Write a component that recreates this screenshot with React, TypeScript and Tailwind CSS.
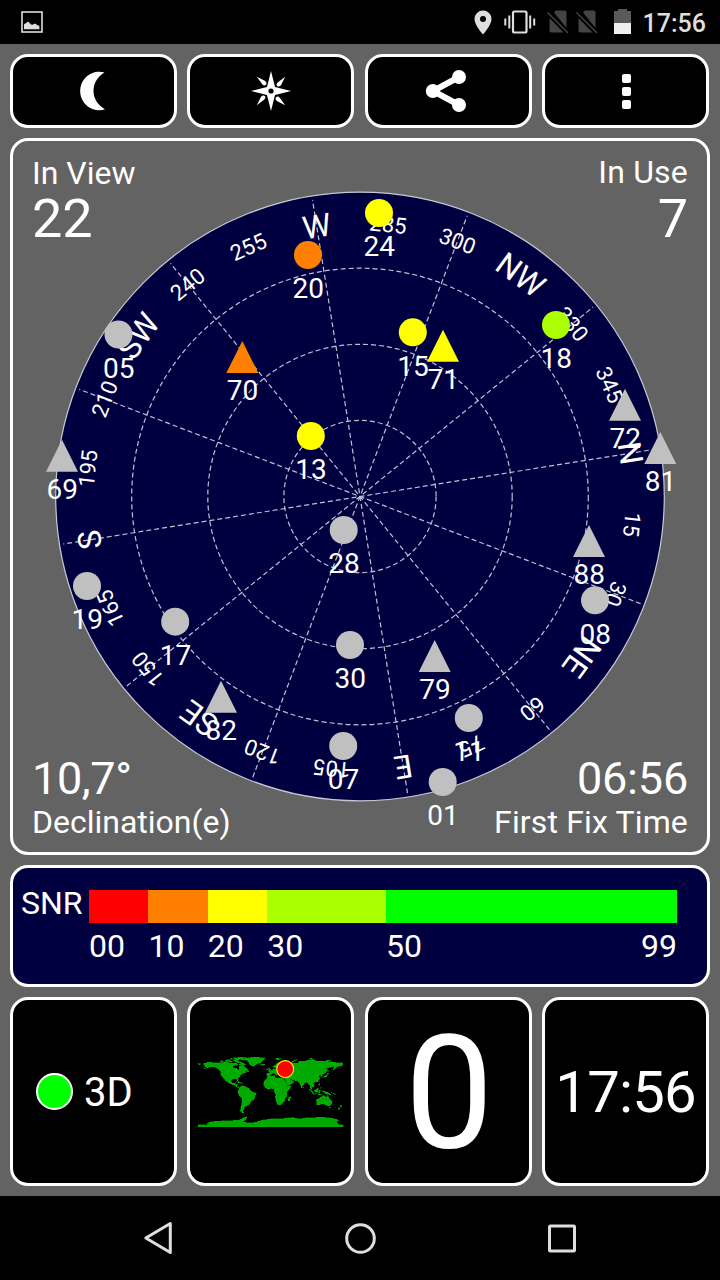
import type { ReactNode } from "react";

type Satellite = {
  id: string;
  x: number;
  y: number;
  shape: "circle" | "triangle";
  color: string;
};

const HEADING = 80.9;
const CX = 360;
const CY = 496.5;
const RADIUS = 304.3;

const GRAY = "#c0c0c0";
const ORANGE = "#ff8000";
const YELLOW = "#ffff00";
const LIME = "#aaff00";

const satellites: Satellite[] = [
  { id: "24", x: 379, y: 213, shape: "circle", color: YELLOW },
  { id: "20", x: 308, y: 255, shape: "circle", color: ORANGE },
  { id: "05", x: 118.5, y: 334.5, shape: "circle", color: GRAY },
  { id: "70", x: 242.3, y: 357, shape: "triangle", color: ORANGE },
  { id: "15", x: 412.8, y: 332.3, shape: "circle", color: YELLOW },
  { id: "71", x: 443, y: 345.7, shape: "triangle", color: YELLOW },
  { id: "18", x: 556, y: 325, shape: "circle", color: LIME },
  { id: "72", x: 625, y: 404.8, shape: "triangle", color: GRAY },
  { id: "81", x: 660.3, y: 448, shape: "triangle", color: GRAY },
  { id: "13", x: 310.8, y: 436, shape: "circle", color: YELLOW },
  { id: "69", x: 62, y: 455.8, shape: "triangle", color: GRAY },
  { id: "28", x: 343.7, y: 530, shape: "circle", color: GRAY },
  { id: "88", x: 589, y: 541, shape: "triangle", color: GRAY },
  { id: "08", x: 595, y: 600.3, shape: "circle", color: GRAY },
  { id: "19", x: 87, y: 586, shape: "circle", color: GRAY },
  { id: "17", x: 175.2, y: 621.7, shape: "circle", color: GRAY },
  { id: "30", x: 350, y: 645, shape: "circle", color: GRAY },
  { id: "79", x: 434.7, y: 656, shape: "triangle", color: GRAY },
  { id: "82", x: 221, y: 696.7, shape: "triangle", color: GRAY },
  { id: "11", x: 468.8, y: 718, shape: "circle", color: GRAY },
  { id: "07", x: 343.2, y: 746, shape: "circle", color: GRAY },
  { id: "01", x: 442.7, y: 782, shape: "circle", color: GRAY },
];

const bearings = [
  "N", "15", "30", "NE", "60", "75", "E", "105", "120", "SE", "150", "165",
  "S", "195", "210", "SW", "240", "255", "W", "285", "300", "NW", "330", "345",
];

const snrSteps = [
  { from: 0, to: 10, label: "00", bar: "bg-[#ff0000]" },
  { from: 10, to: 20, label: "10", bar: "bg-[#ff8000]" },
  { from: 20, to: 30, label: "20", bar: "bg-[#ffff00]" },
  { from: 30, to: 50, label: "30", bar: "bg-[#aaff00]" },
  { from: 50, to: 99, label: "50", bar: "bg-[#00ff00]" },
];

// lon,lat outlines
const land = [
  // north america
  "-168,66 -162,64 -165,61 -158,58 -164,55 -152,59 -145,60 -135,58 -130,54 -124,48 -124,40 -117,33 -112,25 -106,22 -105,20 -97,16 -92,14.5 -87,12.5 -84,9 -78,7 -77,9 -83,11 -83,16 -88,16 -87,21 -91,18 -96,19 -98,24 -96,28 -90,30 -84,30 -82,25 -80,26 -81,31 -75,36 -74,40 -70,42 -66,44 -60,46 -65,49 -57,51 -56,53 -62,58 -65,60 -70,62 -77,62 -78,58 -77,55 -80,51 -83,55 -93,58 -94,61 -87,64 -82,67 -85,69 -95,68 -105,68 -115,69 -125,70 -135,69 -150,71 -157,71",
  "-180,69 -172,66 -176,65 -180,66",
  "-62,66 -66,62 -78,65 -72,68 -80,70 -88,71 -88,73.5 -78,73 -70,70",
  "-117,70 -105,69 -102,72 -110,73 -118,72",
  "-125,72 -120,71 -117,74 -123,75",
  "-100,71 -94,72 -96,74 -102,73",
  "-110,75 -100,75 -97,77 -112,76.5",
  "-93,75 -80,74.5 -80,76 -92,77",
  "-62,82 -72,83.5 -92,81.5 -86,77 -76,78",
  "-98,78 -92,79 -96,81 -101,79",
  "-86,64 -80,64 -82,66 -86,66",
  "-73,78 -60,82 -35,83.5 -13,81.5 -20,75 -24,70 -35,66 -43,60 -51,64 -54,70 -58,75.5 -68,76",
  "-24,65 -19,63.5 -14,65 -17,66.5 -23,66.5",
  "-59,47.5 -53,47 -56,51",
  "-85,22 -80,23.5 -74,20 -78,20",
  "-74,18 -68,18.5 -70,20 -73,20",
  // south america
  "-77,8 -72,12 -62,10.5 -52,5 -50,0 -44,-3 -35,-6 -39,-14 -41,-22 -48,-26 -53,-34 -58,-35 -58,-38 -62,-39 -65,-42 -66,-46 -69,-50 -68,-53 -65,-55 -71,-55 -75,-50 -73,-40 -71,-30 -70,-18 -76,-14 -81,-6 -80,0",
  // africa
  "-6,36 10,37 11,33 20,31 32,31 35,27 38,19 43,12 51,12 46,3 40,-4 40,-14 35,-20 35,-25 32,-29 26,-34 19,-35 15,-27 12,-17 13,-8 9,0 9,4 4,6 -7,4 -13,8 -17,14 -16,23 -10,30",
  "50,-15 50,-18 47,-25 44,-24 44,-17",
  // eurasia
  "-9,43 -9,37 -5,36 0,39 4,43 9,44 14,40 16,38 18,40 13,45 19,42 22,37 25,40 28,37 36,36 35,31 39,22 43,13 52,17 59,22 56,25 50,27 48,30 57,26 66,25 70,21 73,17 77,8 80,13 86,20 91,22 94,17 98,15 99,8 103,2 103,6 100,13 105,9 109,12 106,19 110,21 117,23 122,30 119,36 122,40 126,38 126,35 129,36 129,41 138,46 141,53 136,55 150,59 158,61 156,52 163,57 165,60 179,63 180,69 165,70 150,72 140,73 128,73 113,74 105,78 95,76 82,73 70,73 68,69 55,69 44,67 40,65 33,67 41,67 30,70 20,70 12,65 5,61 6,58 12,59 13,56 18,60 18,63 24,66 22,61 30,60 22,58 20,55 10,54 8,57 8,54 2,51 -4,48 -1,45",
  "-5,50 1,51 0,54 -4,58 -6,57 -3,54",
  "-10,52 -6,52 -6,55 -9,54",
  "52,71 57,71 60,75 68,77 60,76 54,73",
  "11,79 20,77 27,80 15,80.5",
  "80,9 82,7 80,6",
  "96,79 105,79 100,81",
  "138,74 150,75 142,76",
  "142,54 144,49 142,46",
  "140,42 145,43 142,45",
  "130,33 136,34 140,35 142,40 140,41 137,37 131,35",
  "108,18 111,19 110,20",
  "120,22 122,24 121,25",
  // south east asia
  "95,5 98,4 106,-3 105,-6 101,-2",
  "105,-6 115,-8 114,-9 106,-8",
  "109,1 114,4 117,7 119,5 116,-4 111,-3",
  "119,-5 120,1 125,2 121,0 123,-5 121,-3",
  "120,18 122,18 122,14 124,12 120,14",
  "122,7 126,9 126,6",
  "117,-9 127,-8 124,-10",
  "127,2 129,1 128,-2",
  "131,-1 138,-2 146,-6 151,-10 143,-9 138,-8 133,-4",
  "149,-5 152,-3 152,-5",
  "155,-6 161,-9 160,-10",
  // oceania
  "114,-22 122,-18 130,-12 136,-12 136,-15 141,-17 142,-11 146,-19 153,-26 151,-34 147,-38 140,-37 136,-34 130,-32 123,-34 115,-35",
  "145,-41 148,-41 147,-44",
  "173,-35 178,-38 175,-41 174,-38",
  "173,-41 174,-42 168,-47 167,-45",
  // antarctica
  "-180,-85 -155,-85 -158,-82 -150,-77 -115,-74.5 -100,-74 -80,-73.5 -68,-67 -58,-64 -62,-72 -70,-78 -50,-80 -35,-78 -20,-73 0,-70 30,-69.5 55,-66 70,-70 90,-67 130,-66 145,-67 160,-70 170,-73 163,-78 170,-84 180,-85 180,-90 -180,-90",
];

const StatusBar = () => (
  <header className="flex h-11 items-center justify-between bg-black pr-3.5 pl-[21px] text-[#dedede]">
    <svg width="22" height="22" viewBox="0 0 22 22" fill="none">
      <rect x="1" y="1" width="20" height="20" stroke="currentColor" strokeWidth="1.6" />
      <path d="M3 18.3v-5l2.5-1.5 1.5-1.3 3 3 1.5.2 2.5-1.3 2.5 1.8 1.8.6.2 3.5z" fill="currentColor" />
    </svg>
    <div className="flex items-center">
      <svg width="18" height="25" viewBox="0 0 18 25">
        <path
          fillRule="evenodd"
          d="M9 .5A8.5 8.5 0 0 0 .5 9C.5 15.2 9 24.5 9 24.5S17.5 15.2 17.5 9A8.5 8.5 0 0 0 9 .5zM9 6a3 3 0 1 1 0 6 3 3 0 0 1 0-6z"
          fill="currentColor"
        />
      </svg>
      <svg className="ml-3" width="32" height="24" viewBox="0 0 32 24" fill="none" stroke="currentColor">
        <rect x="9" y="1.5" width="13.5" height="21" rx="1.5" strokeWidth="2.2" />
        <path d="M5.3 5.5v13M26.2 5.5v13" strokeWidth="2" />
        <path d="M1.3 8.5v7M30.2 8.5v7" strokeWidth="2" />
      </svg>
      <NoSimIcon className="ml-[11px]" />
      <NoSimIcon className="ml-[7px]" />
      <svg className="mb-0.5 ml-4" width="17" height="25" viewBox="0 0 17 25">
        <path d="M0 2h4V0h9v2h4v12H0z" fill="#5a5a5a" />
        <path d="M0 14h17v11H0z" fill="#efefef" />
      </svg>
      <span className="mt-0.5 ml-3 text-[25px] leading-none font-medium">17:56</span>
    </div>
  </header>
);

const NoSimIcon = ({ className }: { className: string }) => (
  <svg className={className} width="22" height="24" viewBox="0 0 22 24">
    <path d="M2.5 8l14 14.5H4.5a2 2 0 0 1-2-2zM7 2.5L9 .5h8.5a2 2 0 0 1 2 2V18z" fill="#444" />
    <path d="M.5 2.5l20.5 20.5" stroke="#444" strokeWidth="1.5" />
  </svg>
);

const Tile = ({ children, className }: { children: ReactNode; className: string }) => (
  <button
    type="button"
    className={`flex items-center justify-center rounded-[18px] border-[3px] border-white bg-black ${className}`}
  >
    {children}
  </button>
);

const Toolbar = () => (
  <nav className="grid grid-cols-4 gap-[10.5px] pr-px">
    <Tile className="h-[74px]">
      <svg width="40" height="40" viewBox="0 0 40 40">
        <path
          d="M31.5 1.5C27 .3 22.500.8 19.500 2a19.300 19.300 0 0 0 0 36c4 1.500 8.500 1.500 12.500.3C24.500 34 20.500 27 20.500 20S24 6 31.500 1.500z"
          fill="#fff"
        />
      </svg>
    </Tile>
    <Tile className="h-[74px]">
      <svg width="40" height="40" viewBox="0 0 40 40" fill="#fff">
        <path
          fillRule="evenodd"
          d="M20 0l4 16L40 20l-16 4-4 16-4-16L0 20l16-4zM20 17.4a2.6 2.6 0 1 0 0 5.2 2.6 2.6 0 0 0 0-5.2z"
        />
        {[0, 90, 180, 270].map(angle => (
          <path
            key={angle}
            transform={`rotate(${angle} 20 20)`}
            d="M34.2 5.8l-4 8c-1 1.7-2.8 2.3-4 1.1-1.2-1.2-.6-3 1.1-4z"
          />
        ))}
      </svg>
    </Tile>
    <Tile className="h-[74px]">
      <svg className="mr-1" width="42" height="42" viewBox="0 0 42 42">
        <path d="M34 7L8 21l26 14" fill="none" stroke="#fff" strokeWidth="6" />
        <circle cx="7.8" cy="21" r="7" fill="#fff" />
        <circle cx="34" cy="7" r="7" fill="#fff" />
        <circle cx="34" cy="35" r="7" fill="#fff" />
      </svg>
    </Tile>
    <Tile className="h-[74px]">
      <span className="ml-px flex flex-col gap-1">
        <i className="h-[9px] w-[9px] rounded-[2px] bg-white" />
        <i className="h-[9px] w-[9px] rounded-[2px] bg-white" />
        <i className="h-[9px] w-[9px] rounded-[2px] bg-white" />
      </span>
    </Tile>
  </nav>
);

const Marker = ({ sat }: { sat: Satellite }) => (
  <g>
    {sat.shape === "circle" ? (
      <circle cx={sat.x} cy={sat.y} r="14" fill={sat.color} />
    ) : (
      <path d={`M${sat.x} ${sat.y - 16}l16 32h-32z`} fill={sat.color} />
    )}
    <text x={sat.x + 0.3} y={sat.y + 43.3} fontSize="28" textAnchor="middle">
      {sat.id}
    </text>
  </g>
);

const SkyPlot = () => (
  <svg className="absolute inset-0 h-full w-full" viewBox="13 141 694 711" fill="#fff" overflow="visible">
    <circle cx={CX} cy={CY} r={RADIUS} fill="#000040" stroke="#c8c8d4" strokeWidth="1.2" />
    <g fill="none" stroke="#c0c0d4" strokeWidth="1.2" strokeDasharray="5 3">
      {[76.1, 152.2, 228.3].map(r => (
        <circle key={r} cx={CX} cy={CY} r={r} />
      ))}
      {[0, 30, 60, 90, 120, 150].map(angle => (
        <path key={angle} transform={`rotate(${angle + HEADING} ${CX} ${CY})`} d={`M${CX} ${CY - 300.5}v601`} />
      ))}
    </g>
    {bearings.map((label, i) => {
      const isDigit = /\d/.test(label);
      return (
        <text
          key={label}
          transform={`rotate(${i * 15 + HEADING} ${CX} ${CY})`}
          x={CX}
          y={CY - (isDigit ? 265.7 : 262.6)}
          fontSize={isDigit ? 22 : 32}
          textAnchor="middle"
        >
          {label}
        </text>
      );
    })}
    {satellites.map(sat => (
      <Marker key={sat.id} sat={sat} />
    ))}
  </svg>
);

const SkyPanel = () => (
  <section className="relative flex h-[717px] flex-col justify-between rounded-[18px] border-[3px] border-white px-[19px] pt-4 pb-3.5">
    <SkyPlot />
    <div className="relative flex justify-between text-[32px] leading-8">
      <div>
        <p>In View</p>
        <p className="mt-[3px] text-[54px] leading-[54px]">22</p>
      </div>
      <div className="-mt-px text-right">
        <p className="tracking-[0.2px]">In Use</p>
        <p className="mt-1 text-[54px] leading-[54px]">7</p>
      </div>
    </div>
    <div className="relative flex justify-between text-[32px] leading-8">
      <div>
        <p className="mb-[5px] text-[45px] leading-[45px] tracking-[-0.4px]">10,7°</p>
        <p>Declination(e)</p>
      </div>
      <div className="text-right">
        <p className="mb-[5px] text-[45px] leading-[45px] tracking-[-0.2px]">06:56</p>
        <p className="tracking-[0.15px]">First Fix Time</p>
      </div>
    </div>
  </section>
);

const SnrPanel = () => (
  <section className="flex h-[122px] rounded-[18px] border-[3px] border-white bg-[#000040] pt-[19px] pr-[30px] pl-2 text-[32px] leading-8">
    <span className="w-[68px]">SNR</span>
    <div className="flex flex-1 pt-[3px]">
      {snrSteps.map(step => (
        <div key={step.label} style={{ width: `${((step.to - step.from) / 99) * 100}%` }}>
          <div className={`h-[33px] ${step.bar}`} />
          <div className="mt-[7px] flex justify-between">
            <span>{step.label}</span>
            {step.to === 99 && <span>99</span>}
          </div>
        </div>
      ))}
    </div>
  </section>
);

const WorldMap = () => (
  <svg width="145" height="70" viewBox="-180 -84 360 174" preserveAspectRatio="none" overflow="visible">
    <g transform="scale(1 -1)" fill="#00aa00" stroke="#00aa00" strokeWidth="1" shapeRendering="crispEdges">
      {land.map(points => (
        <polygon key={points} points={points} />
      ))}
    </g>
    <circle cx="36.5" cy="-54" r="21" fill="#ff0000" stroke="#ffff00" strokeWidth="2.6" />
  </svg>
);

const BottomTiles = () => (
  <div className="grid grid-cols-4 gap-[10.5px] pr-px">
    <Tile className="h-[189px] justify-start! gap-[11px] pl-[23px]">
      <span className="h-[37px] w-[37px] rounded-full border-2 border-white bg-[#00ff00]" />
      <span className="pt-0.5 text-[40px] leading-none">3D</span>
    </Tile>
    <Tile className="h-[189px]">
      <WorldMap />
    </Tile>
    <Tile className="h-[189px]">
      <span className="pt-0.5 pl-0.5 text-[158px] leading-none">0</span>
    </Tile>
    <Tile className="h-[189px]">
      <span className="text-[58px] leading-none tracking-[-0.8px]">17:56</span>
    </Tile>
  </div>
);

const NavBar = () => (
  <footer className="flex h-[84px] items-center justify-center gap-[170px] bg-black">
    <svg width="32" height="36" viewBox="0 0 32 36" fill="none" stroke="#dedede" strokeWidth="3">
      <path d="M28.3 3.5v29L3.8 18z" strokeLinejoin="round" />
    </svg>
    <svg width="32" height="32" viewBox="0 0 32 32" fill="none" stroke="#dedede" strokeWidth="3">
      <circle cx="16.5" cy="16.5" r="13.8" />
    </svg>
    <svg width="32" height="32" viewBox="0 0 32 32" fill="none" stroke="#dedede" strokeWidth="3">
      <rect x="3.5" y="4" width="25" height="25" rx="1" />
    </svg>
  </footer>
);

export default function App() {
  return (
    <div className="flex h-[1280px] w-[720px] flex-col overflow-hidden bg-[#636363] font-['Roboto','Liberation_Sans',sans-serif] text-white">
      <StatusBar />
      <main className="flex flex-1 flex-col gap-2.5 px-2.5 pt-2.5">
        <Toolbar />
        <SkyPanel />
        <SnrPanel />
        <BottomTiles />
      </main>
      <NavBar />
    </div>
  );
}
